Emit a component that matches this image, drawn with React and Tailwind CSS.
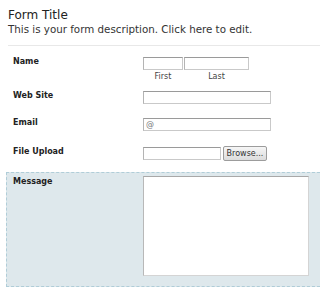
import React from 'react';

const inputCls =
  "block h-[13px] border border-[#c9c9c9] border-t-[#9a9a9a] border-l-[#b4b4b4] bg-white text-[8px] leading-[11px] text-[#777] px-[2px] outline-none";

const FormRow = ({ label, className = "", children }) => (
  <li className={`flex items-start pl-[13px] leading-none ${className}`}>
    <label className="w-[130px] text-[8px] leading-[10px] font-bold text-[#222]">{label}</label>
    <div className="leading-none">{children}</div>
  </li>
);

export default function App() {
  return (
    <div className="w-[320px] h-[288px] overflow-hidden bg-white font-['DejaVu_Sans',sans-serif]">
      {/* Header */}
      <header className="pl-2 pt-[8px]">
        <h2 className="text-[12px] leading-[15px] text-[#222]">Form Title</h2>
        <p className="text-[10.3px] leading-[13px] text-[#333]">
          This is your form description. Click here to edit.
        </p>
      </header>
      <div className="ml-2 mt-[9px] border-t border-[#e8e8e8]" />

      <ul className="flex flex-col">
        <FormRow label="Name" className="mt-[11px]">
          <div className="flex gap-[1px]">
            <div className="flex flex-col items-center">
              <input className={`${inputCls} w-[40px]`} />
              <span className="mt-[2px] text-[8px] leading-[10px] text-[#444]">First</span>
            </div>
            <div className="flex flex-col items-center">
              <input className={`${inputCls} w-[65px]`} />
              <span className="mt-[2px] text-[8px] leading-[10px] text-[#444]">Last</span>
            </div>
          </div>
        </FormRow>

        <FormRow label="Web Site" className="mt-[9px]">
          <input className={`${inputCls} w-[128px]`} />
        </FormRow>

        <FormRow label="Email" className="mt-[14px]">
          <input className={`${inputCls} w-[128px]`} defaultValue="@" />
        </FormRow>

        <FormRow label="File Upload" className="mt-[16px]">
          <div className="flex items-center gap-[2px] -mt-[1px]">
            <div className={`${inputCls} w-[78px]`} />
            <button className="block h-[15px] w-[44px] rounded-[2px] border border-[#9c9c9c] bg-gradient-to-b from-[#f6f6f6] to-[#dcdcdc] text-[8px] leading-[13px] text-[#333]">
              Browse...
            </button>
          </div>
        </FormRow>

        {/* Highlighted message row */}
        <li className="mt-[11px] ml-[6px] flex items-start border border-r-0 border-dashed border-[#b0cdd8] bg-[#dee8ec] pl-[6px] pt-[3px] pb-[10px]">
          <label className="w-[130px] pt-[1px] text-[8px] leading-[10px] font-bold text-[#222]">Message</label>
          <textarea className="block h-[100px] w-[166px] resize-none border border-[#d4d4d4] border-t-[#a8a8a8] border-l-[#b8b8b8] bg-white outline-none" />
        </li>
      </ul>
    </div>
  );
}
